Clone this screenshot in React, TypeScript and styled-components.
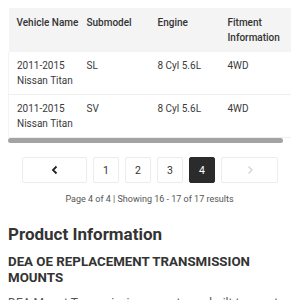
import React from 'react';
import styled, { createGlobalStyle } from 'styled-components';

const GlobalStyle = createGlobalStyle`
  body {
    margin: 8px;
    background: #ffffff;
    font-family: Roboto, "Liberation Sans", sans-serif;
    color: #333333;
  }
`;

const fitments = [
  { vehicle: '2011-2015 Nissan Titan', submodel: 'SL', engine: '8 Cyl 5.6L', fitment: '4WD' },
  { vehicle: '2011-2015 Nissan Titan', submodel: 'SV', engine: '8 Cyl 5.6L', fitment: '4WD' },
];

const columns = [
  { label: 'Vehicle Name', width: 70, wrap: false },
  { label: 'Submodel', width: 71, wrap: false },
  { label: 'Engine', width: 70, wrap: false },
  { label: 'Fitment Information', width: 80, wrap: true },
];

const ChevronLeft: React.FC<{ color: string }> = ({ color }) => (
  <svg width="10" height="10" viewBox="0 0 10 10">
    <path d="M6.5 1.5 L3 5 L6.5 8.5" fill="none" stroke={color} strokeWidth="1.8" />
  </svg>
);

const ChevronRight: React.FC<{ color: string }> = ({ color }) => (
  <svg width="10" height="10" viewBox="0 0 10 10">
    <path d="M3.5 1.5 L7 5 L3.5 8.5" fill="none" stroke={color} strokeWidth="1.2" />
  </svg>
);

export default function App() {
  return (
    <>
      <GlobalStyle />
      <TableWrap>
        <Table>
          <colgroup>
            {columns.map((c) => (
              <col key={c.label} style={{ width: c.width }} />
            ))}
          </colgroup>
          <thead>
            <tr>
              {columns.map((c) => (
                <HeadCell key={c.label} wrap={c.wrap}>
                  {c.label}
                </HeadCell>
              ))}
            </tr>
          </thead>
          <tbody>
            {fitments.map((row, i) => (
              <tr key={i}>
                <Cell>{row.vehicle}</Cell>
                <Cell>{row.submodel}</Cell>
                <Cell>{row.engine}</Cell>
                <Cell>{row.fitment}</Cell>
              </tr>
            ))}
          </tbody>
        </Table>
      </TableWrap>
      <ScrollTrack>
        <ScrollThumb />
      </ScrollTrack>

      <Pagination>
        <PageButton wide={65}>
          <ChevronLeft color="#222" />
        </PageButton>
        <PageButton>1</PageButton>
        <PageButton>2</PageButton>
        <PageButton>3</PageButton>
        <PageButton active>4</PageButton>
        <PageButton wide={57}>
          <ChevronRight color="#cfcfcf" />
        </PageButton>
      </Pagination>
      <PageInfo>Page 4 of 4 | Showing 16 - 17 of 17 results</PageInfo>

      <SectionTitle>Product Information</SectionTitle>
      <ProductName>DEA OE REPLACEMENT TRANSMISSION MOUNTS</ProductName>
      <Description>DEA Mount Transmission mounts are built to exact OE specifications.</Description>
    </>
  );
}

const TableWrap = styled.div`
  width: 283px;
  overflow: hidden;
`;

const Table = styled.table`
  width: 291px;
  border-collapse: collapse;
  table-layout: fixed;
  font-size: 10px;
  line-height: 15px;
`;

const HeadCell = styled.th<{ wrap?: boolean }>`
  padding: 7px 0 7px 8px;
  height: 30px;
  background: #f4f4f4;
  font-weight: 500;
  text-align: left;
  vertical-align: top;
  white-space: ${({ wrap }) => (wrap ? 'normal' : 'nowrap')};
  color: #333333;
`;

const Cell = styled.td`
  padding: 6px 0 6px 8px;
  height: 30px;
  vertical-align: top;
  color: #3a3a3a;
  border-bottom: 1px solid #efefef;
  &:first-child {
    border-left: 1px solid #f4f4f4;
  }
`;

const ScrollTrack = styled.div`
  width: 283px;
  height: 5px;
`;

const ScrollThumb = styled.div`
  width: 275px;
  height: 5px;
  border-radius: 3px;
  background: #a3a3a3;
`;

const Pagination = styled.div`
  display: flex;
  justify-content: center;
  gap: 6px;
  margin-top: 14px;
  padding-left: 1px;
`;

const PageButton = styled.div<{ active?: boolean; wide?: number }>`
  display: flex;
  align-items: center;
  justify-content: center;
  width: ${({ wide }) => (wide ? `${wide}px` : '26px')};
  height: 26px;
  box-sizing: border-box;
  border: 1px solid ${({ active }) => (active ? '#2b2b2b' : '#ececec')};
  border-radius: 2px;
  background: ${({ active }) => (active ? '#2b2b2b' : '#ffffff')};
  color: ${({ active }) => (active ? '#ffffff' : '#333333')};
  font-size: 10.5px;
`;

const PageInfo = styled.div`
  margin-top: 9px;
  text-align: center;
  font-size: 9px;
  line-height: 14px;
  color: #555555;
`;

const SectionTitle = styled.h2`
  margin: 17px 0 0;
  font-size: 17px;
  line-height: 22px;
  font-weight: 700;
  color: #333333;
`;

const ProductName = styled.h3`
  margin: 9px 0 0;
  font-size: 13.3px;
  line-height: 16px;
  font-weight: 700;
  color: #333333;
`;

const Description = styled.p`
  margin: 9px 0 0;
  font-size: 12px;
  line-height: 16px;
  color: #555555;
`;
